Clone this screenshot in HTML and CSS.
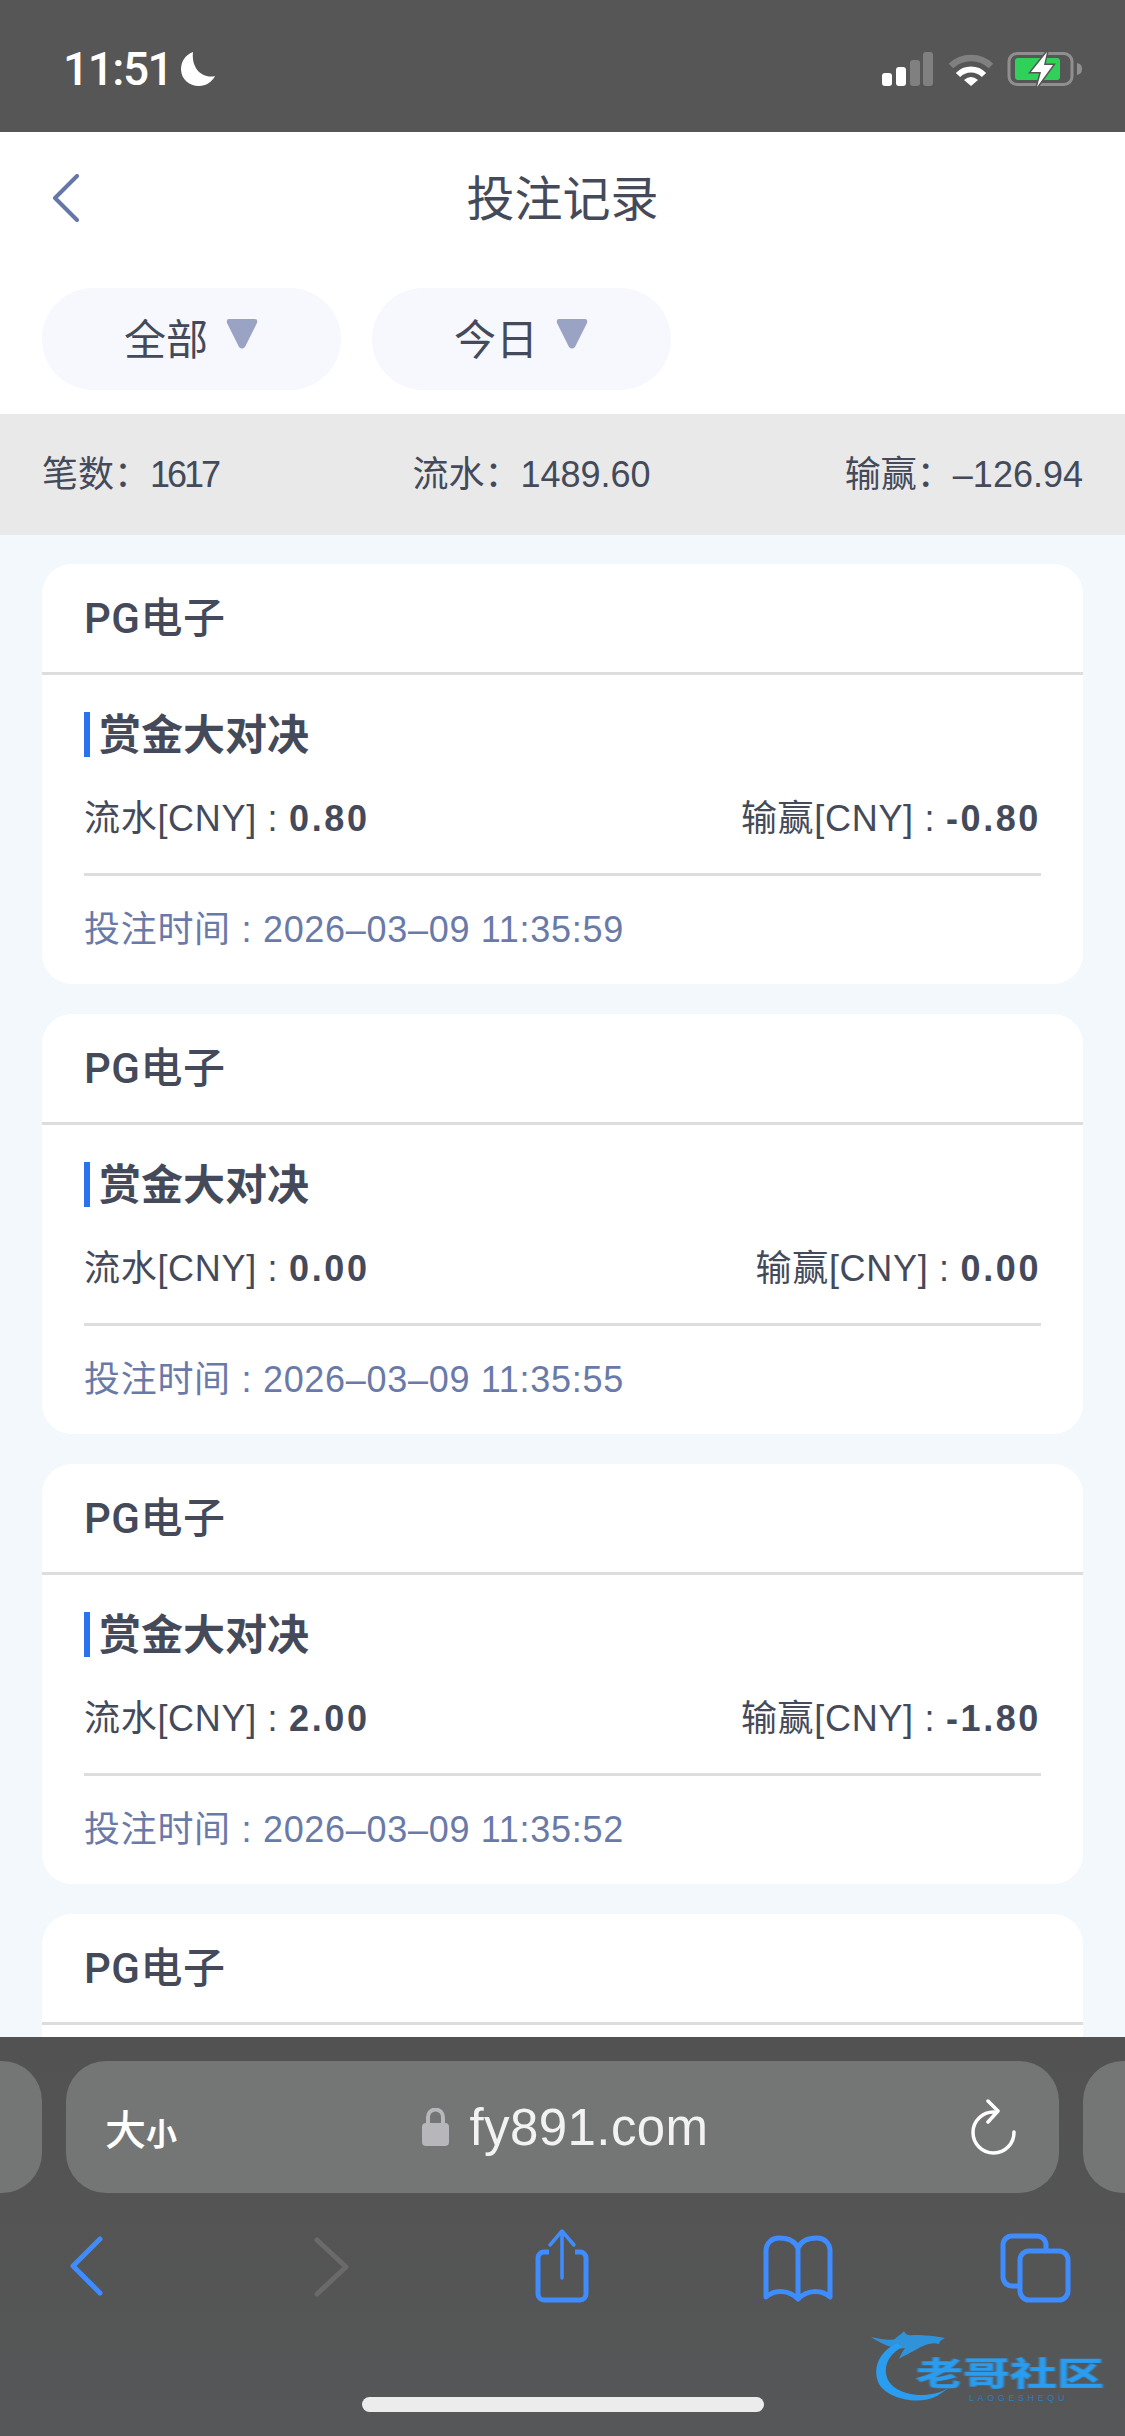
FILE: index.html
```html
<!DOCTYPE html>
<html lang="zh-CN">
<head>
    <meta charset="UTF-8" />
    <meta name="viewport" content="width=device-width, initial-scale=1.0" />
    <title>投注记录</title>
    <link rel="stylesheet" href="styles.css">
</head>
<body>

<div class="phone">
    <div class="status-bar">
        <div class="status-left">
            <span class="clock">11:51</span>
            <svg class="moon" viewBox="0 0 36 36"><path d="M13 1C5 4 1 11 1 18c0 10 8 17 18 17 7 0 13-4 16-10C23 28 11 18 13 1Z" fill="#fff"/></svg>
        </div>
        <div class="status-right">
            <svg class="signal" viewBox="0 0 51 34">
                <rect x="0" y="21" width="10" height="13" rx="3" fill="#fff"/>
                <rect x="14" y="15" width="10" height="19" rx="3" fill="#fff"/>
                <rect x="28" y="8" width="10" height="26" rx="3" fill="#808080"/>
                <rect x="41" y="0" width="10" height="34" rx="3" fill="#808080"/>
            </svg>
            <svg class="wifi" viewBox="0 0 46 34">
                <path d="M3 14a29 29 0 0 1 40 0" fill="none" stroke="#808080" stroke-width="6.5"/>
                <path d="M10 23a18 18 0 0 1 26 0" fill="none" stroke="#fff" stroke-width="6"/>
                <path d="M16 28q7-6 14 0l-7 6Z" fill="#fff"/>
            </svg>
            <svg class="battery" viewBox="0 0 80 38">
                <rect x="4" y="3.500" width="63" height="31" rx="8" fill="none" stroke="#8f8f8f" stroke-width="3"/>
                <rect x="10" y="8" width="45" height="22" rx="3" fill="#30d158"/>
                <path d="M72 13c4 1 5 3 5 6s-1 5-5 6Z" fill="#8f8f8f"/>
                <path d="M42 2 26 22h10l-4 15 16-22h-9Z" fill="#fff" stroke="#565656" stroke-width="3" paint-order="stroke"/>
            </svg>
        </div>
    </div>

    <div class="page">
        <div class="nav">
            <svg class="nav-back" viewBox="0 0 28 48"><path d="M25 2 3 24l22 22" fill="none" stroke="#6576a8" stroke-width="4" stroke-linecap="round" stroke-linejoin="round"/></svg>
            <h1 class="nav-title">投注记录</h1>
        </div>

        <div class="filters">
            <div class="filter">
                <span>全部</span>
                <svg class="filter-arrow" viewBox="0 0 32 30"><path d="M3 0h26q3 0 2 4L19 28q-3 3-6 0L1 4Q0 0 3 0Z" fill="#9aa3c3"/></svg>
            </div>
            <div class="filter">
                <span>今日</span>
                <svg class="filter-arrow" viewBox="0 0 32 30"><path d="M3 0h26q3 0 2 4L19 28q-3 3-6 0L1 4Q0 0 3 0Z" fill="#9aa3c3"/></svg>
            </div>
        </div>

        <div class="summary">
            <span>笔数：<span class="count">1617</span></span>
            <span>流水：1489.60</span>
            <span>输赢：–126.94</span>
        </div>

        <div class="list">
            <div class="card">
                <div class="card-head">PG电子</div>
                <div class="card-body">
                    <div class="game">赏金大对决</div>
                    <div class="amounts">
                        <span>流水[CNY] : <b>0.80</b></span>
                        <span>输赢[CNY] : <b>-0.80</b></span>
                    </div>
                    <div class="bet-time">投注时间 : 2026–03–09 11:35:59</div>
                </div>
            </div>
            <div class="card">
                <div class="card-head">PG电子</div>
                <div class="card-body">
                    <div class="game">赏金大对决</div>
                    <div class="amounts">
                        <span>流水[CNY] : <b>0.00</b></span>
                        <span>输赢[CNY] : <b>0.00</b></span>
                    </div>
                    <div class="bet-time">投注时间 : 2026–03–09 11:35:55</div>
                </div>
            </div>
            <div class="card">
                <div class="card-head">PG电子</div>
                <div class="card-body">
                    <div class="game">赏金大对决</div>
                    <div class="amounts">
                        <span>流水[CNY] : <b>2.00</b></span>
                        <span>输赢[CNY] : <b>-1.80</b></span>
                    </div>
                    <div class="bet-time">投注时间 : 2026–03–09 11:35:52</div>
                </div>
            </div>
            <div class="card">
                <div class="card-head">PG电子</div>
            </div>
        </div>
    </div>

    <div class="browser-bar">
        <div class="tabs">
            <div class="tab-side tab-left"></div>
            <div class="url-bar">
                <span class="text-size">大<small>小</small></span>
                <span class="address">
                    <svg class="lock" viewBox="0 0 27 38">
                        <path d="M6 17V9a7.500 7.500 0 0 1 15 0v8" fill="none" stroke="#b6b6bb" stroke-width="4"/>
                        <rect x="0" y="15" width="27" height="23" rx="4" fill="#b6b6bb"/>
                    </svg>
                    fy891.com
                </span>
                <svg class="reload" viewBox="0 0 46 56">
                    <path d="M23 13A20.500 20.500 0 1 0 43 33" fill="none" stroke="#fff" stroke-width="3.500" stroke-linecap="round"/>
                    <path d="M17 2 27 12 17 23" fill="none" stroke="#fff" stroke-width="3.500" stroke-linecap="round" stroke-linejoin="round"/>
                </svg>
            </div>
            <div class="tab-side tab-right"></div>
        </div>
        <div class="toolbar">
            <svg class="tool" viewBox="0 0 100 80"><path d="M64 13 37 40l27 27" fill="none" stroke="#3f8cff" stroke-width="5" stroke-linecap="round" stroke-linejoin="round"/></svg>
            <svg class="tool" viewBox="0 0 100 80"><path d="M44 14 73 41 44 68" fill="none" stroke="#6a6a6a" stroke-width="5" stroke-linecap="round" stroke-linejoin="round"/></svg>
            <svg class="tool" viewBox="0 0 100 80">
                <path d="M39 26H34a6 6 0 0 0-6 6v36a6 6 0 0 0 6 6h36a6 6 0 0 0 6-6V32a6 6 0 0 0-6-6h-5" fill="none" stroke="#3f8cff" stroke-width="5"/>
                <path d="M52 52V6M40 19 52 5l12 14" fill="none" stroke="#3f8cff" stroke-width="3.500" stroke-linecap="round" stroke-linejoin="round"/>
            </svg>
            <svg class="tool" viewBox="0 0 100 80">
                <path d="M51 22c-3-7-10-10-19-10-7 0-13 5-13 13v46c9-8 23-7 32 2 9-9 23-10 32-2V25c0-8-6-13-13-13-9 0-16 3-19 10Zm0 0v51" fill="none" stroke="#3f8cff" stroke-width="5" stroke-linejoin="round"/>
            </svg>
            <svg class="tool" viewBox="0 0 100 80">
                <path d="M35 60h-7a9 9 0 0 1-9-9V19a9 9 0 0 1 9-9h25a9 9 0 0 1 9 9v6" fill="none" stroke="#3f8cff" stroke-width="5"/>
                <rect x="36" y="25" width="48" height="49" rx="9" fill="none" stroke="#3f8cff" stroke-width="5"/>
            </svg>
        </div>
        <div class="home-indicator"></div>
    </div>

    <div class="logo">
        <svg class="logo-mark" viewBox="0 0 110 80">
            <path d="M27 15C8 24 2 42 9 56c8 14 38 22 58 12l12-8c-16 9-40 10-55-1C12 50 12 30 32 19Z" fill="#2a9df0"/>
            <path d="M1 9c10 2 18 4 24 2 4-4 8-6 9-8 1 3 4 5 9 4 8 0 16 0 32 3-4 2-6 4-6 6-8-2-14 1-20 4-10 6-16 8-20 11 2-5 4-8 6-11-10 2-24-4-34-11Z" fill="#2a9df0" opacity=".85"/>
        </svg>
        <div class="logo-name">老哥社区</div>
        <div class="logo-sub">LAOGESHEQU</div>
    </div>
</div>

</body>
</html>
```

FILE: styles.css
```css
* {
    box-sizing: border-box;
}
html, body {
    margin: 0;
    padding: 0;
}
body {
    font-family: "Liberation Sans", "Noto Sans CJK SC", sans-serif;
    color: #444a5a;
}
.phone {
    position: relative;
    width: 1125px;
    height: 2436px;
    overflow: hidden;
    display: flex;
    flex-direction: column;
    background-color: #f3f8fc;
}

/* status bar */
.status-bar {
    height: 132px;
    flex: none;
    background-color: #565656;
    display: flex;
    justify-content: space-between;
    align-items: flex-start;
    padding: 52px 40px 0 63px;
}
.status-left {
    display: flex;
    align-items: center;
    height: 34px;
}
.clock {
    font-family: Roboto, sans-serif;
    font-weight: 500;
    font-size: 46px;
    letter-spacing: -1.5px;
    color: #fff;
    width: 117px;
}
.moon {
    width: 36px;
    height: 36px;
}
.status-right {
    display: flex;
    align-items: center;
    height: 34px;
}
.signal {
    width: 51px;
    height: 34px;
}
.wifi {
    width: 46px;
    height: 34px;
    margin-left: 15px;
}
.battery {
    width: 80px;
    height: 38px;
    margin-left: 11px;
}

/* page */
.page {
    flex: 1;
    min-height: 0;
    overflow: hidden;
}
.nav {
    height: 132px;
    padding-bottom: 6px;
    background-color: white;
    display: flex;
    align-items: center;
    justify-content: center;
    position: relative;
}
.nav-back {
    position: absolute;
    left: 52px;
    top: 42px;
    width: 28px;
    height: 48px;
}
.nav-title {
    margin: 0;
    font-size: 48px;
    font-weight: 400;
    color: #444a5a;
}
.filters {
    height: 150px;
    background-color: white;
    display: flex;
    gap: 31px;
    padding: 24px 42px 0;
}
.filter {
    width: 299px;
    height: 102px;
    border-radius: 51px;
    background-color: #f6f8fd;
    display: flex;
    align-items: center;
    padding: 0 0 6px 82px;
    font-size: 42px;
    color: #444a5a;
}
.filter-arrow {
    width: 32px;
    height: 30px;
    margin-left: 18px;
    margin-bottom: 4px;
}
.summary {
    height: 121px;
    padding: 0 42px 8px;
    background-color: #e9e9e9;
    display: flex;
    justify-content: space-between;
    align-items: center;
    font-size: 36px;
}
.count {
    letter-spacing: -3px;
}
.list {
    padding: 29px 42px 0;
    display: flex;
    flex-direction: column;
    gap: 30px;
}

/* cards */
.card {
    background: white;
    border-radius: 30px;
    height: 420px;
    flex: none;
}
.card-head {
    height: 111px;
    padding: 0 42px 8px;
    display: flex;
    align-items: center;
    border-bottom: 3px solid #dddddd;
    font-family: Roboto, "Noto Sans CJK SC", sans-serif;
    font-size: 42px;
    letter-spacing: 0.5px;
    font-weight: 500;
}
.card-body {
    padding: 37px 42px 0;
}
.game {
    border-left: 6px solid #2a73f0;
    height: 45px;
    line-height: 48px;
    padding-left: 9px;
    font-size: 42px;
    font-weight: 700;
}
.amounts {
    height: 119px;
    display: flex;
    justify-content: space-between;
    align-items: center;
    border-bottom: 3px solid #dddddd;
    font-size: 36px;
    letter-spacing: 0.7px;
}
.amounts b {
    letter-spacing: 2.6px;
}
.bet-time {
    height: 100px;
    display: flex;
    align-items: center;
    font-size: 36px;
    letter-spacing: 0.7px;
    color: #6a7aa8;
}

/* safari bar */
.browser-bar {
    height: 399px;
    flex: none;
    background: linear-gradient(#525252, #565758);
    padding-top: 24px;
    display: flex;
    flex-direction: column;
}
.tabs {
    height: 132px;
    flex: none;
    display: flex;
    gap: 24px;
    margin: 0 -42px;
}
.tab-side {
    flex: none;
    width: 84px;
    background-color: #747575;
}
.tab-left {
    border-radius: 0 40px 40px 0;
}
.tab-right {
    border-radius: 40px 0 0 40px;
}
.url-bar {
    flex: 1;
    background-color: #747575;
    border-radius: 40px;
    display: flex;
    justify-content: space-between;
    align-items: center;
    padding: 0 42px 0 39px;
    color: white;
}
.text-size {
    font-size: 41px;
    font-weight: 500;
    width: 100px;
}
.text-size small {
    font-size: 31px;
    font-weight: 700;
}
.address {
    display: flex;
    align-items: center;
    gap: 21px;
    font-size: 51px;
    letter-spacing: 0.4px;
    color: #f2f2f2;
}
.lock {
    width: 27px;
    height: 38px;
}
.reload {
    width: 46px;
    height: 56px;
    margin-left: 46px;
}
.toolbar {
    display: flex;
    justify-content: space-between;
    padding: 33px 41px 0 36px;
}
.tool {
    width: 100px;
    height: 80px;
    flex: none;
}
.home-indicator {
    width: 402px;
    height: 15px;
    border-radius: 8px;
    background-color: #ececec;
    margin: 91px auto 0;
}

/* watermark over the bar */
.logo {
    position: absolute;
    left: 870px;
    top: 2328px;
    width: 245px;
    height: 84px;
    color: #2a9df0;
}
.logo-mark {
    position: absolute;
    left: 0;
    top: 0;
    width: 110px;
    height: 80px;
    filter: blur(0.7px);
}
.logo-name {
    position: absolute;
    left: 46px;
    top: 26px;
    font-size: 47px;
    line-height: 40px;
    font-weight: 700;
    white-space: nowrap;
    -webkit-text-stroke: 1px #2a9df0;
    transform: scaleY(0.68);
    filter: blur(0.8px);
}
.logo-sub {
    position: absolute;
    left: 99px;
    top: 65px;
    font-size: 9px;
    letter-spacing: 3.6px;
    color: #2b7fb8;
}
```
